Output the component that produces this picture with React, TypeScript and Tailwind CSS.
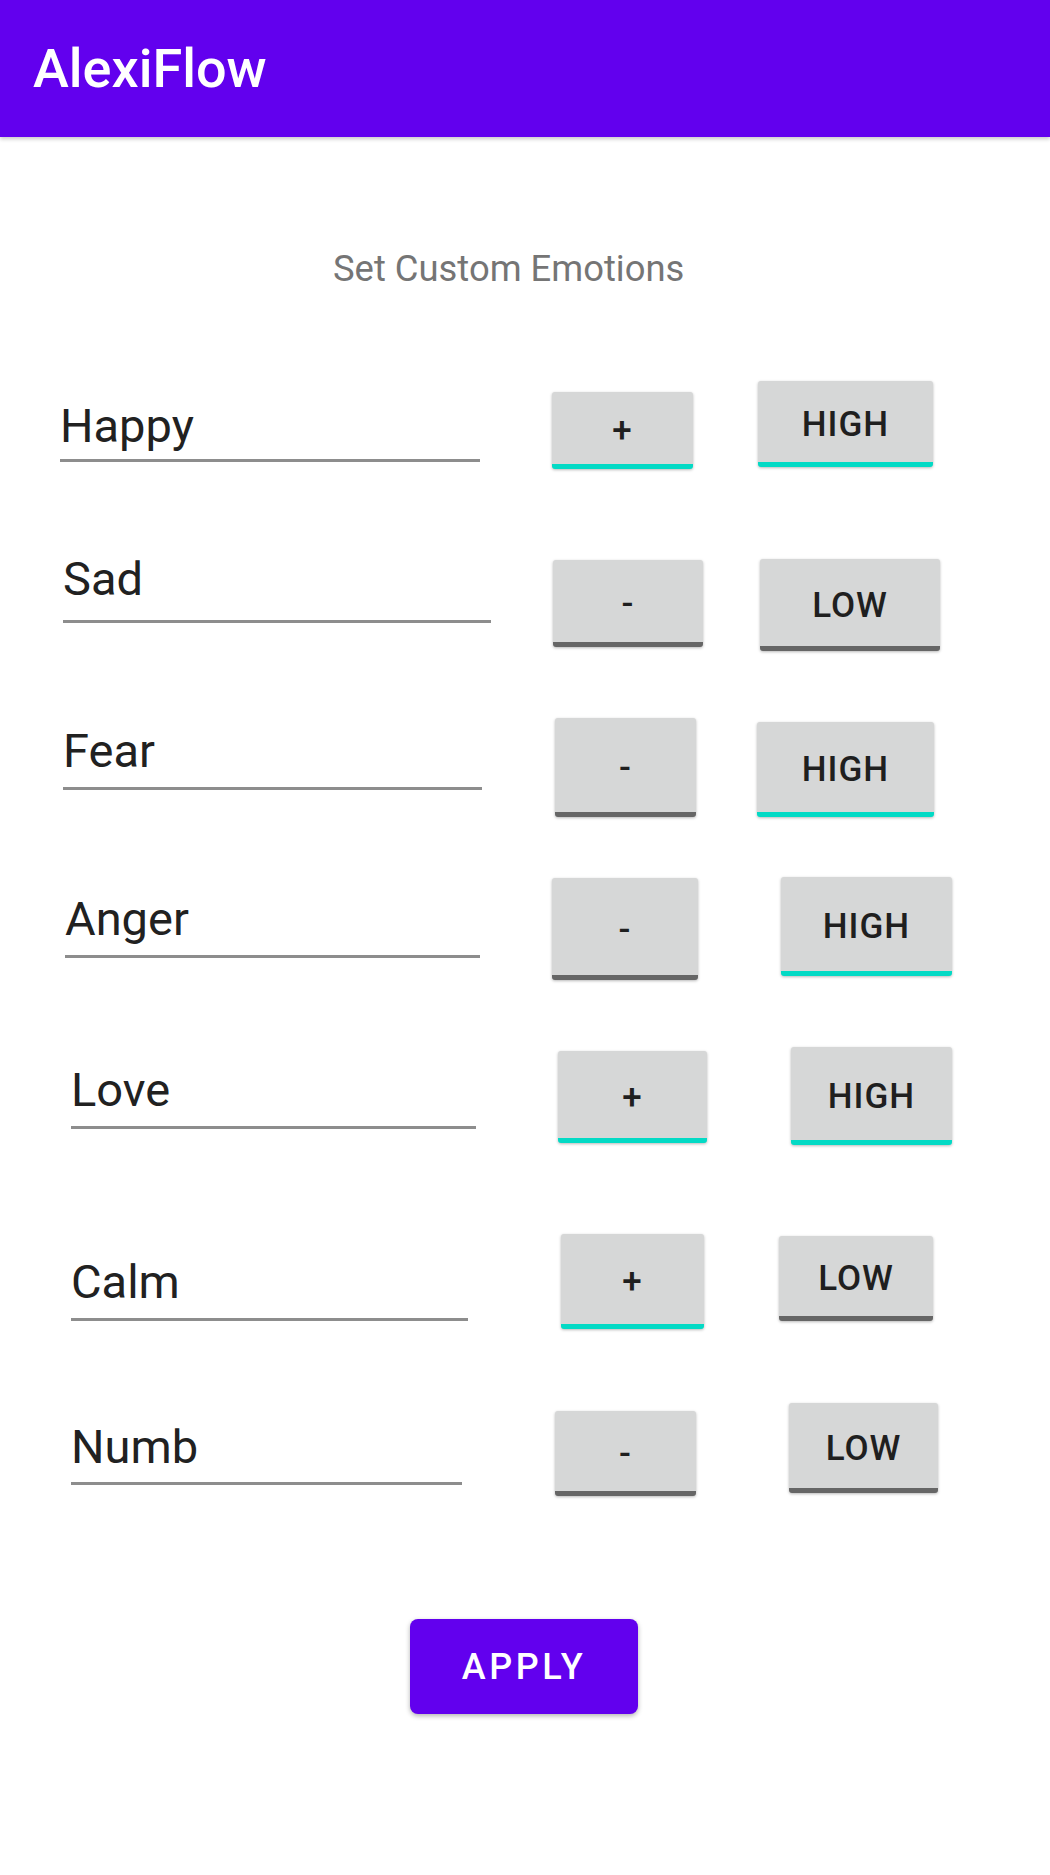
import React from "react";

type Btn = {
  label: string;
  on: boolean;
  cls: string;
};

type Row = {
  name: string;
  rowCls: string;
  editCls: string;
  btns: Btn[];
};

const rows: Row[] = [
  {
    name: "Happy",
    rowCls: "h-[170px]",
    editCls: "ml-[60px] mt-[28px] w-[420px] pb-[5px]",
    btns: [
      { label: "+", on: true, cls: "ml-[72px] mt-[22px] w-[141px] h-[77px]" },
      { label: "HIGH", on: true, cls: "ml-[65px] mt-[11px] w-[175px] h-[86px]" },
    ],
  },
  {
    name: "Sad",
    rowCls: "h-[160px]",
    editCls: "ml-[63px] mt-[11px] w-[428px] pb-[13px]",
    btns: [
      { label: "-", on: false, cls: "ml-[62px] mt-[20px] w-[150px] h-[87px]" },
      { label: "LOW", on: false, cls: "ml-[57px] mt-[19px] w-[180px] h-[92px]" },
    ],
  },
  {
    name: "Fear",
    rowCls: "h-[160px]",
    editCls: "ml-[63px] mt-[23px] w-[419px] pb-[8px]",
    btns: [
      { label: "-", on: false, cls: "ml-[73px] mt-[18px] w-[141px] h-[99px]" },
      { label: "HIGH", on: true, cls: "ml-[61px] mt-[22px] w-[177px] h-[95px]" },
    ],
  },
  {
    name: "Anger",
    rowCls: "h-[170px]",
    editCls: "ml-[65px] mt-[31px] w-[415px] pb-[8px]",
    btns: [
      { label: "-", on: false, cls: "ml-[72px] mt-[18px] w-[146px] h-[102px]" },
      { label: "HIGH", on: true, cls: "ml-[83px] mt-[17px] w-[171px] h-[99px]" },
    ],
  },
  {
    name: "Love",
    rowCls: "h-[170px]",
    editCls: "ml-[71px] mt-[32px] w-[405px] pb-[8px]",
    btns: [
      { label: "+", on: true, cls: "ml-[82px] mt-[21px] w-[149px] h-[92px]" },
      { label: "HIGH", on: true, cls: "ml-[84px] mt-[17px] w-[161px] h-[98px]" },
    ],
  },
  {
    name: "Calm",
    rowCls: "h-[180px]",
    editCls: "ml-[71px] mt-[54px] w-[397px] pb-[8px]",
    btns: [
      { label: "+", on: true, cls: "ml-[93px] mt-[34px] w-[143px] h-[95px]" },
      { label: "LOW", on: false, cls: "ml-[75px] mt-[36px] w-[154px] h-[85px]" },
    ],
  },
  {
    name: "Numb",
    rowCls: "h-[180px]",
    editCls: "ml-[71px] mt-[39px] w-[391px] pb-[7px]",
    btns: [
      { label: "-", on: false, cls: "ml-[93px] mt-[31px] w-[141px] h-[85px]" },
      { label: "LOW", on: false, cls: "ml-[93px] mt-[23px] w-[149px] h-[90px]" },
    ],
  },
];

function Toggle({ b }: { b: Btn }) {
  return (
    <div
      className={
        "shrink-0 flex items-center justify-center pt-[5px] rounded-[3px] bg-[#d6d7d7] border-b-[5px] shadow-[0_1px_3px_rgba(0,0,0,0.28)] text-[35px] font-medium tracking-[1px] text-[#1f1f1f] leading-none " +
        (b.on ? "border-[#03dac5] " : "border-[#666666] ") +
        b.cls
      }
    >
      {b.label}
    </div>
  );
}

export default function App() {
  return (
    <div className="w-[1050px] min-h-[1875px] bg-white font-['Roboto','Noto_Sans',sans-serif] flex flex-col">
      <header className="relative z-10 h-[137px] shrink-0 bg-[#6200ee] flex items-center pl-[33px] shadow-[0_2px_4px_rgba(0,0,0,0.22)]">
        <span className="text-white text-[54px] font-medium leading-[137px]">AlexiFlow</span>
      </header>

      <div className="mt-[112px] ml-[333px] text-[36.4px] leading-[40px] text-[#757575]">
        Set Custom Emotions
      </div>

      <div className="mt-[81px] flex flex-col">
        {rows.map((r) => (
          <div key={r.name} className={"flex items-start shrink-0 " + r.rowCls}>
            <div className={"shrink-0 border-b-[3px] border-[#8d8d8d] " + r.editCls}>
              <div className="text-[47px] leading-[56px] text-[#212121]">{r.name}</div>
            </div>
            {r.btns.map((b, i) => (
              <Toggle key={i} b={b} />
            ))}
          </div>
        ))}
      </div>

      <div className="mt-[59px] ml-[410px] w-[228px] h-[95px] shrink-0 rounded-[8px] bg-[#6200ee] flex items-center justify-center text-white text-[36px] font-medium tracking-[3.5px] shadow-[0_2px_5px_rgba(0,0,0,0.3)]">
        APPLY
      </div>
    </div>
  );
}
